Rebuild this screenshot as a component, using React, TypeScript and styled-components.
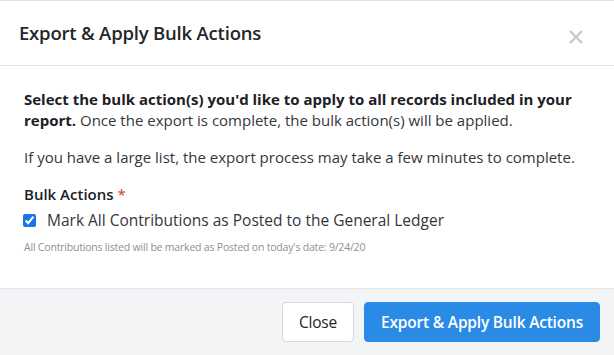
import styled, { createGlobalStyle } from 'styled-components';

const GlobalStyle = createGlobalStyle`
  html, body {
    margin: 0;
    padding: 0;
    background: #ffffff;
  }
  body {
    font-family: "Open Sans", "Noto Sans", sans-serif;
    color: #212529;
  }
`;

const Modal = styled.div`
  width: 614px;
  height: 355px;
  display: flex;
  flex-direction: column;
  border-top: 1px solid #dde2ea;
  box-sizing: border-box;
  background: #fff;
`;

const Header = styled.div`
  height: 64px;
  display: flex;
  align-items: center;
  justify-content: space-between;
  padding: 0 31px 0 19px;
  border-bottom: 1px solid #e3e5e8;
`;

const Title = styled.h2`
  margin: 0;
  font-size: 18.5px;
  line-height: 24px;
  font-weight: 600;
  color: #23262a;
  letter-spacing: -0.2px;
`;

const CloseIcon = styled.button`
  border: none;
  background: none;
  padding: 0;
  margin-top: 8px;
  width: 14px;
  height: 14px;
  display: flex;
  cursor: pointer;
`;

const Body = styled.div`
  flex: 1;
  padding: 23px 24px 0 24px;
  font-size: 15px;
  line-height: 21px;
  color: #33373c;
`;

const Paragraph = styled.p`
  margin: 0 0 16px 0;
  strong {
    font-weight: 700;
    color: #1d2024;
  }
`;

const FieldLabel = styled.div`
  font-weight: 600;
  color: #1d2024;
  margin-top: 1px;
`;

const Required = styled.span`
  color: #e0534a;
  margin-left: 4px;
`;

const CheckRow = styled.label`
  display: flex;
  align-items: center;
  gap: 11px;
  margin-top: 5px;
  font-size: 15.5px;
  color: #33373c;
`;

const Check = styled.input`
  margin: 0 0 0 -1px;
  width: 13px;
  height: 13px;
  accent-color: #1a73e8;
`;

const Help = styled.div`
  margin-top: 6px;
  font-size: 10.5px;
  color: #8b9096;
  letter-spacing: -0.2px;
`;

const Footer = styled.div`
  height: 67px;
  box-sizing: border-box;
  border-top: 1px solid #e3e5e8;
  background: #f3f4f6;
  display: flex;
  align-items: center;
  justify-content: flex-end;
  gap: 10px;
  padding: 0 14px 0 0;
`;

const Button = styled.button<{ $primary?: boolean }>`
  height: 40px;
  padding: 0 ${(p) => (p.$primary ? '16px' : '16px')};
  border-radius: 4px;
  font-family: inherit;
  font-size: 15.5px;
  font-weight: ${(p) => (p.$primary ? 600 : 400)};
  letter-spacing: -0.2px;
  border: 1px solid ${(p) => (p.$primary ? '#2a8be6' : '#d6d9dd')};
  background: ${(p) => (p.$primary ? '#2a8be6' : '#ffffff')};
  color: ${(p) => (p.$primary ? '#ffffff' : '#23262a')};
  cursor: pointer;
`;

export default function App() {
  return (
    <>
      <GlobalStyle />
      <Modal>
        <Header>
          <Title>Export &amp; Apply Bulk Actions</Title>
          <CloseIcon aria-label="Close">
            <svg width="14" height="14" viewBox="0 0 14 14">
              <path d="M1 1 L13 13 M13 1 L1 13" stroke="#c6c8cb" strokeWidth="2.4" strokeLinecap="butt" />
            </svg>
          </CloseIcon>
        </Header>
        <Body>
          <Paragraph>
            <strong>Select the bulk action(s) you'd like to apply to all records included in your report.</strong>{' '}
            Once the export is complete, the bulk action(s) will be applied.
          </Paragraph>
          <Paragraph>If you have a large list, the export process may take a few minutes to complete.</Paragraph>
          <FieldLabel>
            Bulk Actions<Required>*</Required>
          </FieldLabel>
          <CheckRow>
            <Check type="checkbox" defaultChecked />
            Mark All Contributions as Posted to the General Ledger
          </CheckRow>
          <Help>All Contributions listed will be marked as Posted on today's date: 9/24/20</Help>
        </Body>
        <Footer>
          <Button>Close</Button>
          <Button $primary>Export &amp; Apply Bulk Actions</Button>
        </Footer>
      </Modal>
    </>
  );
}
